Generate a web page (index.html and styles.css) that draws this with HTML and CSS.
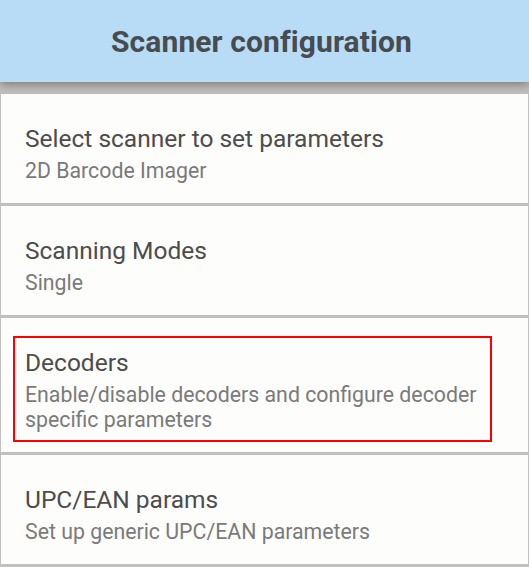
FILE: index.html
```html
<!DOCTYPE html>
<html lang="en">
<head>
<meta charset="utf-8">
<title>Scanner configuration</title>
<link rel="stylesheet" href="styles.css">
</head>
<body>
<div class="screen">
  <header class="appbar">
    <h1 class="appbar-title">Scanner configuration</h1>
  </header>
  <main class="pref-list">
    <div class="pref">
      <div class="pref-title">Select scanner to set parameters</div>
      <div class="pref-summary">2D Barcode Imager</div>
    </div>
    <div class="pref">
      <div class="pref-title">Scanning Modes</div>
      <div class="pref-summary">Single</div>
    </div>
    <div class="pref pref-highlighted">
      <div class="highlight">
        <div class="pref-title">Decoders</div>
        <div class="pref-summary">Enable/disable decoders and configure decoder specific parameters</div>
      </div>
    </div>
    <div class="pref">
      <div class="pref-title">UPC/EAN params</div>
      <div class="pref-summary">Set up generic UPC/EAN parameters</div>
    </div>
  </main>
</div>
</body>
</html>
```

FILE: styles.css
```css
html, body {
  margin: 0;
  padding: 0;
}
body {
  width: 529px;
  height: 567px;
  overflow: hidden;
  background: #c0c0be;
  font-family: Roboto, "Noto Sans", "Liberation Sans", sans-serif;
}
.screen {
  display: flex;
  flex-direction: column;
  height: 567px;
}
.appbar {
  position: relative;
  z-index: 1;
  height: 84px;
  background: #b8dcf6;
  display: flex;
  align-items: center;
  justify-content: center;
  padding-right: 6px;
  box-shadow: 0 3px 9px rgba(0, 0, 0, 0.35);
}
.appbar-title {
  margin: 0;
  font-size: 30px;
  font-weight: 700;
  color: #464c4f;
  letter-spacing: 0.1px;
}
.pref-list {
  display: flex;
  flex-direction: column;
  gap: 3px;
  padding: 12px 1px 3px 1px;
}
.pref {
  background: #fdfdfc;
  padding: 30px 24px 20px 24px;
}
.pref-title {
  font-size: 24.5px;
  line-height: 30px;
  color: #4c4c4c;
}
.pref-summary {
  margin-top: 4px;
  font-size: 21.3px;
  line-height: 25px;
  color: #7a7a7a;
}
.pref-highlighted {
  padding-top: 18px;
  padding-bottom: 10px;
}
.highlight {
  margin: 0 12px 0 -12px;
  border: 2px solid #ff0000;
  padding: 10px 4px 8px 10px;
}
```
